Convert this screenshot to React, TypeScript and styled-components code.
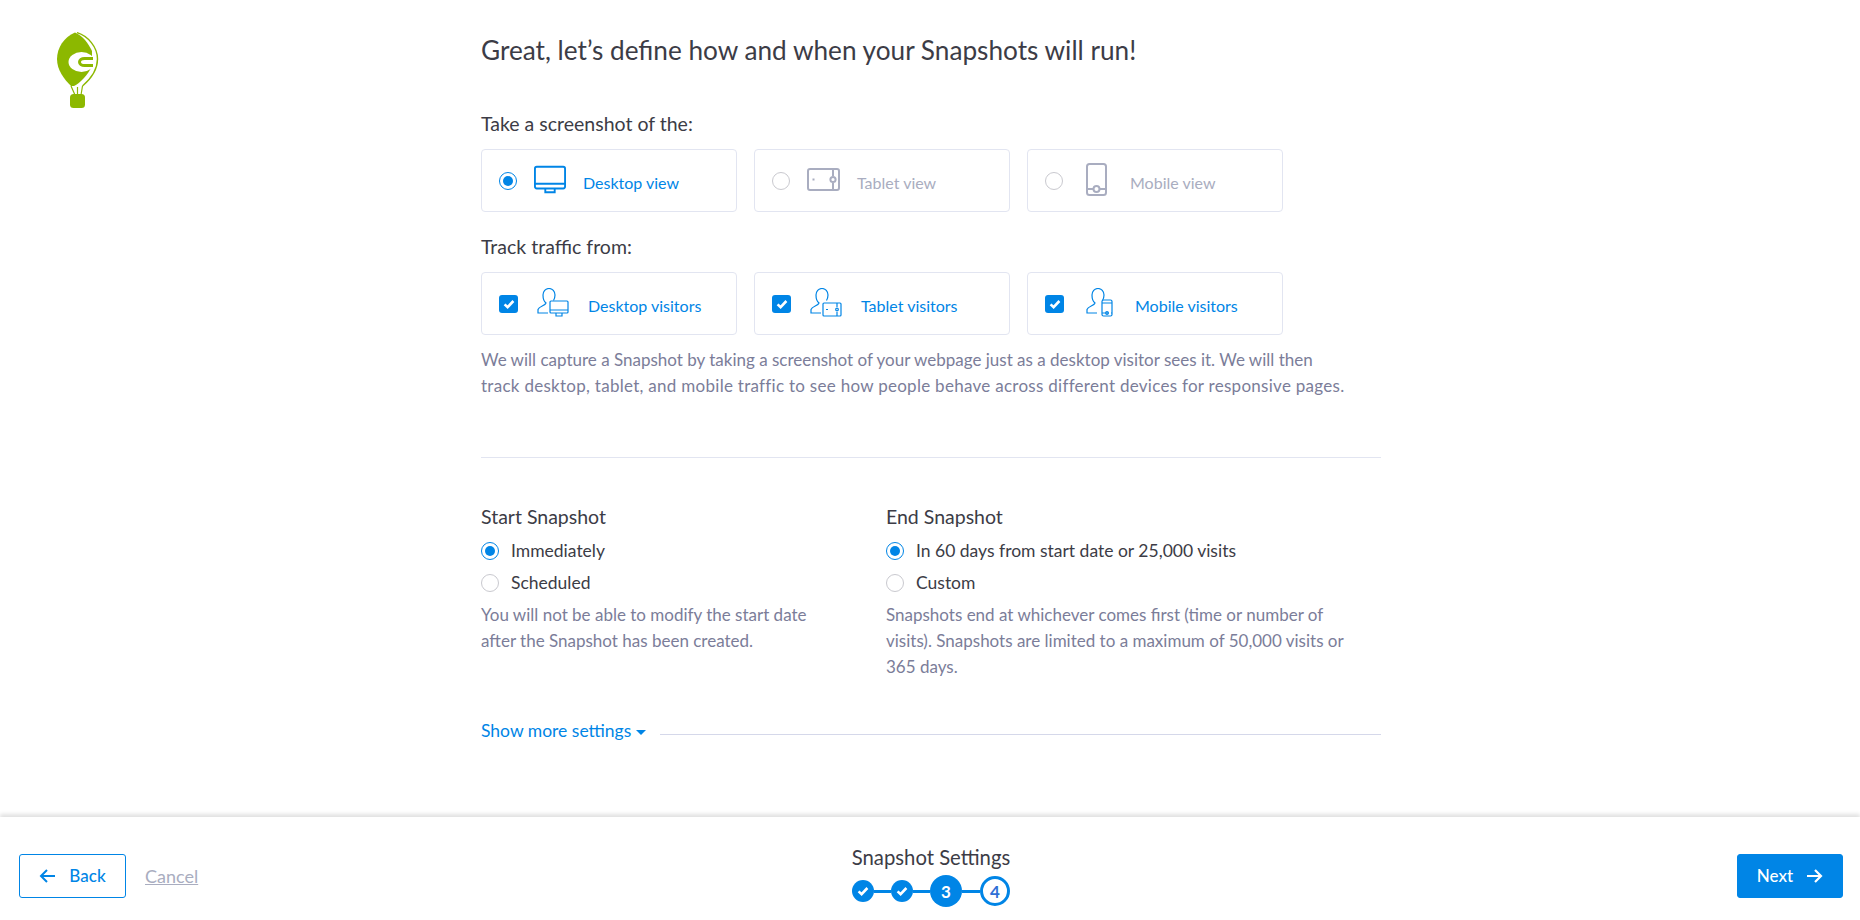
import { ReactNode } from "react";
import styled, { createGlobalStyle } from "styled-components";

const Global = createGlobalStyle`
  html, body { margin: 0; padding: 0; background: #fff; }
  body { font-family: Lato, "Open Sans", sans-serif; color: #3c3c46; }
`;

const BLUE = "#0085e6";
const MUTED = "#a9adc0";

const Page = styled.div`
  width: 1860px;
  height: 920px;
  display: flex;
  flex-direction: column;
  overflow: hidden;
`;

const Main = styled.div`
  flex: 1;
  display: flex;
`;

const LogoColumn = styled.div`
  width: 481px;
  padding: 32px 0 0 57px;
  box-sizing: border-box;
`;

const Content = styled.main`
  width: 900px;
  padding-top: 33px;
`;

const Title = styled.h1`
  margin: 0 0 45px;
  font-size: 26.200px;
  line-height: 34px;
  font-weight: 400;
`;

const Label = styled.div`
  font-size: 19.500px;
  line-height: 24px;
  margin-bottom: 13px;
`;

const CardRow = styled.div`
  display: flex;
  gap: 17px;
  margin-bottom: 23px;
`;

const Card = styled.div<{ $off?: boolean; $gap: number }>`
  width: 256px;
  height: 63px;
  box-sizing: border-box;
  border: 1px solid #e2e5f1;
  border-radius: 4px;
  padding-left: 17px;
  display: flex;
  align-items: center;
  gap: ${(p) => p.$gap}px;
  font-size: 16px;
  color: ${(p) => (p.$off ? MUTED : BLUE)};
`;

const CardText = styled.span`
  margin-top: 3px;
`;

const Radio = styled.span<{ $on?: boolean }>`
  width: 18px;
  height: 18px;
  flex: none;
  box-sizing: border-box;
  border-radius: 50%;
  border: 1px solid ${(p) => (p.$on ? BLUE : "#c9c9cf")};
  position: relative;
  &::after {
    content: "";
    display: ${(p) => (p.$on ? "block" : "none")};
    position: absolute;
    inset: 3px;
    border-radius: 50%;
    background: ${BLUE};
  }
`;

const Check = styled.span`
  width: 19px;
  height: 18px;
  flex: none;
  border-radius: 3px;
  background: ${BLUE};
  display: flex;
  align-items: center;
  justify-content: center;
`;

const IconSlot = styled.span`
  display: flex;
  flex: none;
  margin-top: -2px;
`;

const Help = styled.p`
  margin: 0;
  font-size: 17px;
  line-height: 26px;
  color: #7b7d99;
`;

const TrafficHelp = styled(Help)`
  margin-top: -11px;
  white-space: nowrap;
`;

const WideLine = styled.span`
  letter-spacing: 0.28px;
`;

const Divider = styled.hr`
  border: 0;
  border-top: 1px solid #e2e5f1;
  margin: 58px 0 49px;
`;

const Columns = styled.div`
  display: grid;
  grid-template-columns: 405px 495px;
  min-height: 186px;
`;

const ColumnTitle = styled.div`
  font-size: 19.500px;
  line-height: 20px;
  margin-bottom: 12px;
`;

const Option = styled.div`
  display: flex;
  align-items: center;
  gap: 12px;
  font-size: 17.500px;
  line-height: 24px;
  margin-bottom: 8px;
  color: #3c3c46;
`;

const ColumnHelp = styled(Help)`
  width: 360px;
  margin-top: -1px;
`;

const WideHelp = styled(Help)`
  width: 480px;
  margin-top: -1px;
`;

const MoreRow = styled.div`
  display: flex;
  align-items: center;
  gap: 14px;
  margin-top: 26px;
  font-size: 17.500px;
  line-height: 24px;
  color: ${BLUE};
`;

const Caret = styled.span`
  display: inline-block;
  margin-left: 5px;
  vertical-align: 2px;
  border-left: 5px solid transparent;
  border-right: 5px solid transparent;
  border-top: 5px solid ${BLUE};
`;

const MoreLine = styled.span`
  flex: 1;
  height: 1px;
  margin-top: 6px;
  background: #d5d8ea;
`;

const Footer = styled.footer`
  height: 103px;
  flex: none;
  display: grid;
  grid-template-columns: 1fr auto 1fr;
  align-items: center;
  padding: 0 17px 0 19px;
  box-shadow: 0 -3px 4px rgba(0, 0, 0, 0.12);
  background: #fff;
`;

const FooterLeft = styled.div`
  display: flex;
  align-items: center;
  gap: 19px;
  margin-top: 14px;
`;

const FooterRight = styled.div`
  display: flex;
  justify-content: flex-end;
  margin-top: 14px;
`;

const Button = styled.button<{ $primary?: boolean }>`
  width: ${(p) => (p.$primary ? 106 : 107)}px;
  height: 44px;
  box-sizing: border-box;
  border-radius: 3px;
  border: 1px solid ${BLUE};
  background: ${(p) => (p.$primary ? BLUE : "#fff")};
  color: ${(p) => (p.$primary ? "#fff" : BLUE)};
  font: 500 17px Lato, sans-serif;
  display: flex;
  align-items: center;
  justify-content: center;
  gap: 14px;
  padding: 0;
`;

const Cancel = styled.a`
  font-size: 18px;
  color: ${MUTED};
  text-decoration: underline;
`;

const Wizard = styled.div`
  display: flex;
  flex-direction: column;
  align-items: center;
  margin-top: 15px;
`;

const WizardTitle = styled.div`
  font-size: 20.300px;
  line-height: 24px;
  margin-bottom: 6px;
`;

const Steps = styled.div`
  display: flex;
  align-items: center;
`;

const Step = styled.span<{ $size: number; $outline?: boolean }>`
  width: ${(p) => p.$size}px;
  height: ${(p) => p.$size}px;
  box-sizing: border-box;
  border-radius: 50%;
  flex: none;
  display: flex;
  align-items: center;
  justify-content: center;
  background: ${(p) => (p.$outline ? "#fff" : BLUE)};
  border: ${(p) => (p.$outline ? `3px solid ${BLUE}` : "0")};
  color: ${(p) => (p.$outline ? "#2f6fd6" : "#fff")};
  font-size: 17px;
  font-weight: 700;
`;

const Link = styled.span<{ $w: number }>`
  width: ${(p) => p.$w}px;
  height: 3px;
  background: ${BLUE};
  flex: none;
`;

const Logo = () => (
  <svg width="42" height="76" viewBox="0 0 42 76">
    <path d="M18 .5C7 5 0 16 0 27c0 11 7 20 14 27h3c6-3 14-11 18-20V19C31 11 26 4 18 .5Z" fill="#8cb800" />
    <path d="M20 .6C31 4 40.500 15 40.500 27c0 11-8 21-15 27" fill="none" stroke="#8cb800" strokeWidth="1.400" />
    <path d="M14 54 18 63M25.500 54 24 63M20.500 55v8" stroke="#8cb800" strokeWidth="1.200" fill="none" />
    <rect x="13" y="62" width="15" height="14" rx="3.500" fill="#8cb800" />
    <ellipse cx="24.500" cy="30" rx="13" ry="10" fill="#fff" />
    <path d="M36 26.500h-8.500c-3 0-5 1.500-5 3.500s2 3.500 5 3.500H36" fill="none" stroke="#8cb800" strokeWidth="3" />
  </svg>
);

const CheckMark = ({ size = 12 }: { size?: number }) => (
  <svg width={size} height={size} viewBox="0 0 12 12">
    <path d="M1.6 6.4 4.6 9.2 10.4 3" fill="none" stroke="#fff" strokeWidth="2.600" />
  </svg>
);

const DesktopIcon = () => (
  <svg width="32" height="29" viewBox="0 0 34 29" fill="none" stroke={BLUE} strokeWidth="2">
    <rect x="1" y="1" width="32" height="23" rx="2" />
    <path d="M1 19h32M12 24v4h10v-4M11 28h12" />
  </svg>
);

const TabletIcon = () => (
  <svg width="33" height="23" viewBox="0 0 33 23" fill="none" stroke={MUTED} strokeWidth="2">
    <rect x="1" y="1" width="31" height="21" rx="2" />
    <path d="M26 1v7M26 15v7M5.5 11.5h2" />
    <circle cx="26" cy="11.5" r="2.6" />
  </svg>
);

const MobileIcon = () => (
  <svg width="21" height="33" viewBox="0 0 21 33" fill="none" stroke={MUTED} strokeWidth="2">
    <rect x="1" y="1" width="19" height="31" rx="2.5" />
    <path d="M1 26h6M14 26h6" />
    <circle cx="10.500" cy="26" r="3" />
  </svg>
);

const visitor = "M11 25H1v-3.500c1-3.500 7-3.500 8-6.500-2-1.500-3-4.500-3-8 0-3.500 2.500-6.500 6-6.500s6 3 6 6.500c0 2-.5 3.700-1.500 5.500";

const DesktopVisitorIcon = () => (
  <svg width="32" height="29" viewBox="0 0 32 29" fill="none" stroke={BLUE} strokeWidth="1.200">
    <path d={visitor} />
    <rect x="13" y="13" width="18" height="12" rx="1" />
    <path d="M13 22h18M19 25v3h6v-3" />
  </svg>
);

const TabletVisitorIcon = () => (
  <svg width="32" height="29" viewBox="0 0 32 29" fill="none" stroke={BLUE} strokeWidth="1.200">
    <path d={visitor} />
    <rect x="13" y="15" width="18" height="13" rx="1" />
    <path d="M27 15v4M27 24v4M16 21.500h2" />
    <circle cx="27" cy="21.500" r="1.300" />
  </svg>
);

const MobileVisitorIcon = () => (
  <svg width="27" height="29" viewBox="0 0 27 29" fill="none" stroke={BLUE} strokeWidth="1.200">
    <path d={visitor} />
    <rect x="16" y="12" width="10" height="16" rx="1.500" />
    <path d="M16 15h10M16 25h7M25 25h1" />
    <circle cx="21" cy="25" r="1.300" />
  </svg>
);

const BackArrow = () => (
  <svg width="16" height="14" viewBox="0 0 16 14" fill="none" stroke={BLUE} strokeWidth="2">
    <path d="M16 7H2M8 1 2 7l6 6" />
  </svg>
);

const NextArrow = () => (
  <svg width="16" height="14" viewBox="0 0 16 14" fill="none" stroke="#fff" strokeWidth="2.200">
    <path d="M0 7h14M8 1l6 6-6 6" />
  </svg>
);

const ViewCard = ({ label, icon, on, gap }: { label: string; icon: ReactNode; on?: boolean; gap: number }) => (
  <Card $off={!on} $gap={gap}>
    <Radio $on={on} />
    <IconSlot>{icon}</IconSlot>
    <CardText>{label}</CardText>
  </Card>
);

const TrafficCard = ({ label, icon, gap }: { label: string; icon: ReactNode; gap: number }) => (
  <Card $gap={gap}>
    <Check>
      <CheckMark />
    </Check>
    <IconSlot>{icon}</IconSlot>
    <CardText>{label}</CardText>
  </Card>
);

const App = () => (
  <Page>
    <Global />
    <Main>
      <LogoColumn>
        <Logo />
      </LogoColumn>
      <Content>
        <Title>Great, let’s define how and when your Snapshots will run!</Title>
        <Label>Take a screenshot of the:</Label>
        <CardRow>
          <ViewCard label="Desktop view" icon={<DesktopIcon />} on gap={17} />
          <ViewCard label="Tablet view" icon={<TabletIcon />} gap={17} />
          <ViewCard label="Mobile view" icon={<MobileIcon />} gap={23} />
        </CardRow>
        <Label>Track traffic from:</Label>
        <CardRow>
          <TrafficCard label="Desktop visitors" icon={<DesktopVisitorIcon />} gap={19} />
          <TrafficCard label="Tablet visitors" icon={<TabletVisitorIcon />} gap={19} />
          <TrafficCard label="Mobile visitors" icon={<MobileVisitorIcon />} gap={22} />
        </CardRow>
        <TrafficHelp>
          We will capture a Snapshot by taking a screenshot of your webpage just as a desktop visitor sees it. We will then
          <br />
          <WideLine>track desktop, tablet, and mobile traffic to see how people behave across different devices for responsive pages.</WideLine>
        </TrafficHelp>
        <Divider />
        <Columns>
          <div>
            <ColumnTitle>Start Snapshot</ColumnTitle>
            <Option>
              <Radio $on />
              Immediately
            </Option>
            <Option>
              <Radio />
              Scheduled
            </Option>
            <ColumnHelp>You will not be able to modify the start date after the Snapshot has been created.</ColumnHelp>
          </div>
          <div>
            <ColumnTitle>End Snapshot</ColumnTitle>
            <Option>
              <Radio $on />
              In 60 days from start date or 25,000 visits
            </Option>
            <Option>
              <Radio />
              Custom
            </Option>
            <WideHelp>
              Snapshots end at whichever comes first (time or number of visits). Snapshots are limited to a maximum of 50,000 visits or 365 days.
            </WideHelp>
          </div>
        </Columns>
        <MoreRow>
          <span>
            Show more settings
            <Caret />
          </span>
          <MoreLine />
        </MoreRow>
      </Content>
    </Main>
    <Footer>
      <FooterLeft>
        <Button>
          <BackArrow />
          Back
        </Button>
        <Cancel>Cancel</Cancel>
      </FooterLeft>
      <Wizard>
        <WizardTitle>Snapshot Settings</WizardTitle>
        <Steps>
          <Step $size={22}>
            <CheckMark />
          </Step>
          <Link $w={17} />
          <Step $size={22}>
            <CheckMark />
          </Step>
          <Link $w={17} />
          <Step $size={32}>3</Step>
          <Link $w={18} />
          <Step $size={30} $outline>
            4
          </Step>
        </Steps>
      </Wizard>
      <FooterRight>
        <Button $primary>
          Next
          <NextArrow />
        </Button>
      </FooterRight>
    </Footer>
  </Page>
);

export default App;
